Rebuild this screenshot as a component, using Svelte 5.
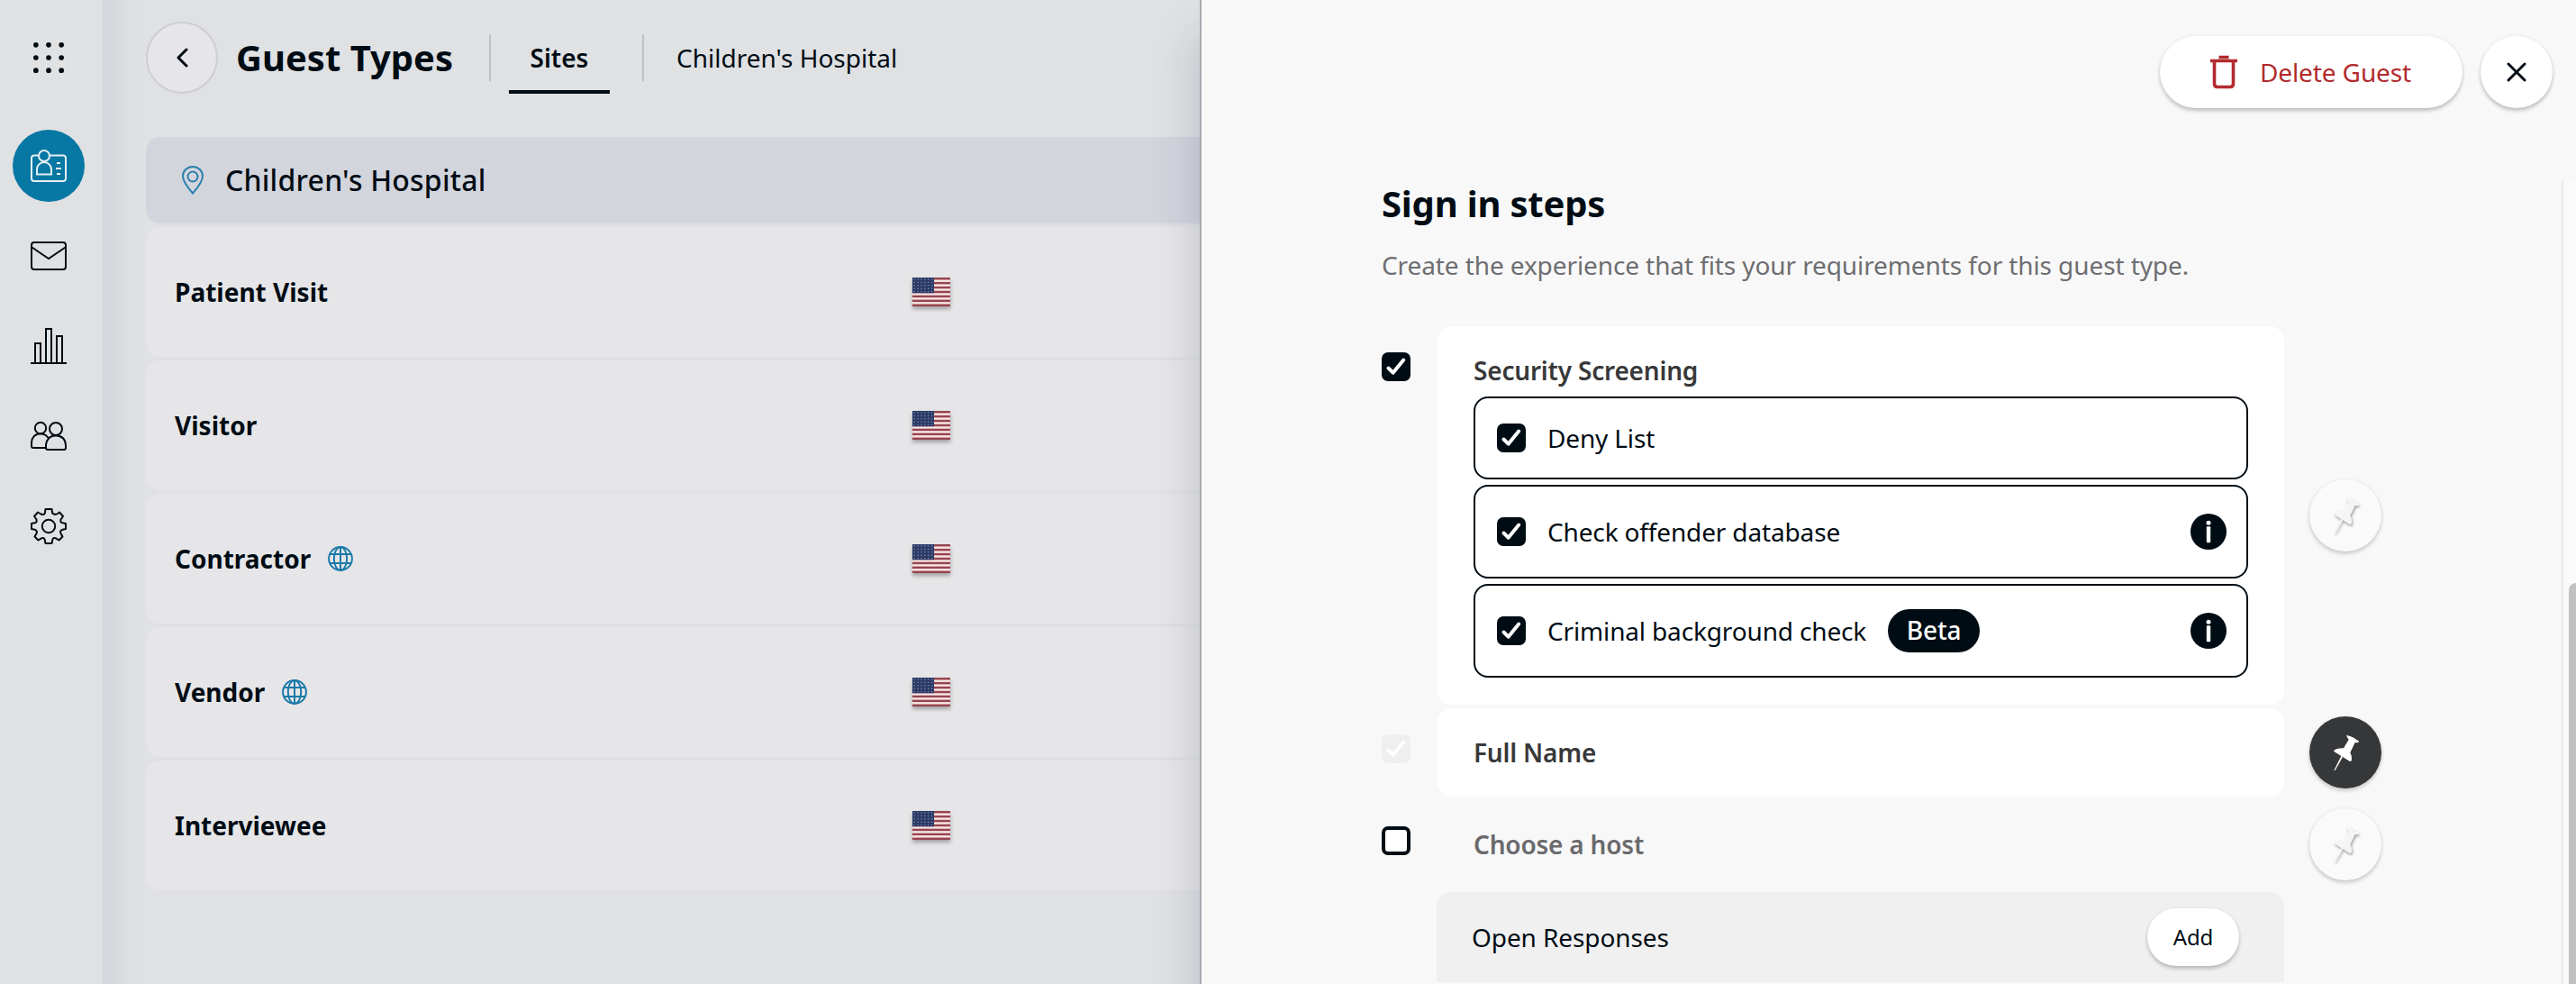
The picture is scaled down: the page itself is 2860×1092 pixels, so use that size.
<script>
  const guestTypes = [
    { name: 'Patient Visit', global: false },
    { name: 'Visitor', global: false },
    { name: 'Contractor', global: true },
    { name: 'Vendor', global: true },
    { name: 'Interviewee', global: false }
  ];
  const screenings = [
    { label: 'Deny List', info: false, beta: false },
    { label: 'Check offender database', info: true, beta: false },
    { label: 'Criminal background check', info: true, beta: true }
  ];
  const dots = [2.8, 16.8, 30.8];
  const stripes = [0, 1, 2, 3, 4, 5, 6];
  const starRows = [0, 1, 2, 3, 4];
  const starCols = [0, 1, 2, 3, 4, 5];
</script>

{#snippet check(state)}
  <span class="check {state}">
    {#if state !== 'off'}
      <svg viewBox="0 0 32 32"><path d="M7.5 17.5 L12.6 22.7 L24.2 8.6" /></svg>
    {/if}
  </span>
{/snippet}

{#snippet pin(active)}
  <button class="pin" class:active aria-label="Pin step">
    <svg viewBox="0 0 240 240">
      <path d="M124 61 Q128 66 136 66 Q152 72 158 79 L165 82 Q164 88 160 88 L152 87 L136 121 Q142 131 141 145 Q139 151 135 150 L82 117 Q79 112 92 108 Q104 105 114 106 L131 77 Q123 68 124 61Z" />
      <path d="M106 132 L111 135 L86 179 L82 180Z" />
    </svg>
  </button>
{/snippet}

<div class="app">
  <nav class="sidebar">
    <svg class="dots" viewBox="0 0 33.6 33.6">
      {#each dots as y}{#each dots as x}<circle cx={x} cy={y} r="2.8" />{/each}{/each}
    </svg>
    <span class="nav-item selected">
      <svg viewBox="0 0 40 40">
        <path d="M9.5 8.5 H4 Q1 8.500 1 11.500 V34 Q1 37 4 37 H36 Q39 37 39 34 V11.500 Q39 8.500 36 8.500 H21" />
        <circle cx="15" cy="9" r="6" />
        <path d="M7 29.500 V24 A8 8 0 0 1 23 24 V29.500Z M29 17 H33 M28 23 H34 M29 29 H33" />
      </svg>
    </span>
    <span class="nav-item">
      <svg viewBox="0 0 40 40"><rect x="1" y="5" width="38" height="30" rx="3" /><path d="M1.500 10.500 L20 23 L38.500 10.500" /></svg>
    </span>
    <span class="nav-item">
      <svg viewBox="0 0 40 40"><path d="M0 39 H40 M5 39 V17 H11 V39 M17 39 V1 H23 V39 M29 39 V9 H35 V39" /></svg>
    </span>
    <span class="nav-item">
      <svg viewBox="0 0 40 40">
        <circle cx="11" cy="11" r="6.200" /><circle cx="28" cy="12" r="7" />
        <path d="M17 33 H3 Q1 33 1 31 V27.500 Q1.500 17.500 11 17.200 Q17 17.500 20 22.500" />
        <path d="M17 29.500 Q18.500 19.500 28 19.200 Q38.500 20 39 30 V33 Q39 35 37 35 H19 Q17 35 17 33Z" />
      </svg>
    </span>
    <span class="nav-item">
      <svg viewBox="0 0 40 40">
        <circle cx="20" cy="20" r="7.200" />
        <path stroke-linejoin="round" d="M16.500 1 H23.500 L24.200 5.500 Q27 8 30 6 L32 4.500 L36 9 L33.500 12.500 Q32.500 15.500 35.500 16.300 L39 17 V23 L35.500 23.700 Q32 25 33.500 28 L35.500 31.500 L31.500 35.500 L28 33.300 Q25 32 24.200 35.500 L23.500 39 H16.500 L15.800 35.500 Q15 32 12 33.300 L8.500 35.500 L4.500 31.500 L6.500 28 Q8 25 4.500 23.700 L1 23 V17 L4.500 16.300 Q7.500 15.500 6.500 12.500 L4 9 L8 4.500 L11.500 6.500 Q15 8 15.800 5.500Z" />
      </svg>
    </span>
  </nav>

  <main class="main">
    <header class="topbar">
      <button class="back" aria-label="Back">
        <svg viewBox="0 0 14 22"><path d="M12 2 L3 11 L12 20" /></svg>
      </button>
      <h1>Guest Types</h1>
      <i class="divider"></i>
      <span class="tab">Sites</span>
      <i class="divider"></i>
      <span class="crumb">Children's Hospital</span>
    </header>

    <section class="list">
      <div class="site">
        <svg viewBox="0 0 24 32"><path d="M12 30.500 Q1 18 1 11.500 A11 10.500 0 0 1 23 11.500 Q23 18 12 30.500Z" /><circle cx="12" cy="12" r="5.500" /></svg>
        <span>Children's Hospital</span>
      </div>
      {#each guestTypes as guest}
        <div class="row">
          <div class="name">
            <span>{guest.name}</span>
            {#if guest.global}
              <svg class="globe" viewBox="0 0 28 28">
                <circle cx="14" cy="14" r="12.900" /><ellipse cx="14" cy="14" rx="7.200" ry="12.900" />
                <path d="M14 1 V27 M2.500 9 H25.500 M2.500 19 H25.500" />
              </svg>
            {/if}
          </div>
          <svg class="flag" viewBox="0 0 42 32">
            <rect width="42" height="32" fill="#f7e6e7" />
            {#each stripes as s}<rect y={s * 4.923} width="42" height="2.462" fill="#98444f" />{/each}
            <rect width="24" height="17.230" fill="#2b3a66" />
            {#each starRows as r}{#each starCols as c}<circle cx={2.2 + c * 3.9} cy={2 + r * 3.4} r="0.700" fill="#8d98b8" />{/each}{/each}
          </svg>
        </div>
      {/each}
    </section>
  </main>

  <aside class="drawer">
    <div class="actions">
      <button class="delete">
        <svg viewBox="0 0 32 38"><path d="M10.500 2.500 H21.500 M1 6.500 H31 M5.500 7 V32 Q5.500 35.500 9 35.500 H23 Q26.500 35.500 26.500 32 V7" /></svg>
        <span>Delete Guest</span>
      </button>
      <button class="close" aria-label="Close">
        <svg viewBox="0 0 22 22"><path d="M2 2 L20 20 M20 2 L2 20" /></svg>
      </button>
    </div>

    <div class="scroller">
      <div class="content">
        <h2>Sign in steps</h2>
        <p>Create the experience that fits your requirements for this guest type.</p>

        <div class="step">
          {@render check('on')}
          <div class="card security">
            <strong>Security Screening</strong>
            {#each screenings as item}
              <div class="option" class:tall={item.info}>
                {@render check('on')}
                <span class="label">{item.label}</span>
                {#if item.beta}<span class="beta">Beta</span>{/if}
                {#if item.info}
                  <svg class="info" viewBox="0 0 40 40"><circle cx="20" cy="20" r="20" fill="#000c14" /><circle cx="20" cy="10.300" r="2.500" fill="#fff" /><rect x="17.800" y="14.300" width="4.400" height="18" rx="1" fill="#fff" /></svg>
                {/if}
              </div>
            {/each}
          </div>
          {@render pin(false)}
        </div>

        <div class="step">
          {@render check('disabled')}
          <div class="card single"><strong>Full Name</strong></div>
          {@render pin(true)}
        </div>

        <div class="step">
          {@render check('off')}
          <div class="card single inactive"><strong>Choose a host</strong></div>
          {@render pin(false)}
        </div>

        <div class="responses">
          <span>Open Responses</span>
          <button class="add">Add</button>
        </div>
      </div>
      <div class="track"><div class="thumb"></div></div>
    </div>
  </aside>
</div>

<style>
  :global(body) { overflow: hidden; }
  .app {
    display: flex;
    width: 2860px;
    height: 1092px;
    overflow: hidden;
    background: #dfe1e3;
    color: #000c14;
    font-family: 'Noto Sans', 'Open Sans', sans-serif;
    font-size: 28px;
    line-height: 38px;
  }
  .app, .app * { box-sizing: border-box; }
  svg { display: block; flex: none; fill: none; }
  button { font: inherit; letter-spacing: inherit; color: inherit; border: 0; padding: 0; margin: 0; flex: none; display: flex; align-items: center; justify-content: center; }
  h1, h2, p { margin: 0; white-space: nowrap; }
  span { white-space: nowrap; }

  .sidebar {
    flex: none;
    width: 114px;
    padding: 47px 0 0 14px;
    display: flex;
    flex-direction: column;
    gap: 20px;
  }
  .dots { width: 34px; height: 34px; margin: 0 0 43px 23px; fill: #000c14; }
  .nav-item { width: 80px; height: 80px; border-radius: 50%; display: flex; align-items: center; justify-content: center; }
  .nav-item svg { width: 40px; height: 40px; stroke: #000c14; stroke-width: 2; }
  .nav-item.selected { background: #0777a3; }
  .nav-item.selected svg { stroke: #e4f0f5; }

  .main {
    flex: none;
    width: 1218px;
    padding: 24px 0 0 48px;
    background: linear-gradient(90deg, #d5d6dc 0, #d8dade 16px, #dddfe2 30px, #dfe1e3 42px);
  }
  .topbar { display: flex; align-items: center; height: 80px; }
  .back { width: 80px; height: 80px; border-radius: 50%; background: #e6e6e8; border: 2px solid #ccced0; }
  .back svg { width: 14px; height: 22px; stroke: #000c14; stroke-width: 3; stroke-linecap: round; stroke-linejoin: round; }
  h1 { flex: none; width: 301px; padding-left: 20px; font-size: 40px; line-height: 54px; font-weight: 700; }
  .divider { flex: none; width: 2px; height: 52px; background: #bfc1c3; }
  .tab { flex: none; height: 80px; line-height: 80px; width: 112px; margin: 0 36px 0 20px; text-align: center; font-weight: 600; border-bottom: 4px solid #000c14; }
  .crumb { margin-left: 36px; }

  .list { margin-top: 48px; display: flex; flex-direction: column; gap: 4px; }
  .site {
    height: 96px;
    display: flex;
    align-items: center;
    gap: 24px;
    padding-left: 40px;
    border-radius: 16px 0 0 16px;
    background: #d3d5dd;
    font-size: 32px;
    font-weight: 500;
    letter-spacing: 0.2px;
  }
  .site svg { width: 24px; height: 32px; stroke: #2a7fab; stroke-width: 2; }
  .row { height: 144px; display: flex; align-items: center; padding-left: 32px; border-radius: 16px 0 0 16px; background: #e6e6e8; }
  .name { width: 819px; display: flex; align-items: center; gap: 19px; font-weight: 700; }
  .globe { width: 28px; height: 28px; stroke: #1b7aa8; stroke-width: 2; }
  .flag { width: 42px; height: 32px; filter: drop-shadow(0 3px 2px rgba(0, 0, 0, 0.3)); }

  .drawer {
    position: relative;
    flex: none;
    width: 1528px;
    border-left: 2px solid #a9aab0;
    background: #f8f8f8;
    box-shadow: 0 40px 48px rgba(30, 35, 70, 0.2);
    letter-spacing: -0.1px;
    display: flex;
    flex-direction: column;
  }
  .actions { flex: none; height: 200px; padding: 40px 26px 0 0; display: flex; justify-content: flex-end; gap: 20px; }
  .delete, .close, .add { background: #fff; box-shadow: 0 3px 4px rgba(0, 0, 0, 0.22), 0 0 4px rgba(0, 0, 0, 0.05); }
  .delete { width: 336px; height: 80px; border-radius: 40px; gap: 24px; padding-right: 2px; color: #b22b2e; }
  .delete svg { width: 32px; height: 38px; stroke: #b22b2e; stroke-width: 3.6; stroke-linecap: butt; }
  .close { width: 80px; height: 80px; border-radius: 50%; }
  .close svg { width: 22px; height: 22px; stroke: #000c14; stroke-width: 3; stroke-linecap: round; }

  .scroller { flex: 1; min-height: 0; display: flex; justify-content: space-between; }
  .content { width: 1120px; margin-left: 200px; }
  h2 { margin-top: -1px; font-size: 40px; line-height: 54px; font-weight: 700; letter-spacing: -0.2px; }
  p { margin-top: 22px; height: 87px; color: #6e6e70; }
  .step { display: flex; align-items: center; margin-bottom: 4px; }
  .check { flex: none; width: 32px; height: 32px; border-radius: 7px; background: #000c14; }
  .check svg { width: 32px; height: 32px; stroke: #fff; stroke-width: 4; stroke-linecap: round; stroke-linejoin: round; }
  .check.off { background: #fff; border: 4px solid #000c14; }
  .check.disabled { background: #efefef; }
  .step > .check { align-self: flex-start; margin: 29px 30px 0 0; }
  .card { width: 940px; border-radius: 16px; background: #fff; }
  .card strong { display: block; font-weight: 600; color: #38383a; letter-spacing: -0.2px; }
  .security { height: 420px; padding: 30px 40px 0; }
  .security strong { height: 48px; }
  .single { height: 98px; padding: 30px 40px; }
  .inactive { background: transparent; }
  .inactive strong { color: #6a6a6c; }
  .option { height: 92px; display: flex; align-items: center; padding: 0 22px 0 24px; margin-bottom: 6px; border: 2px solid #000c14; border-radius: 16px; }
  .option.tall { height: 104px; }
  .label { margin-left: 24px; letter-spacing: -0.15px; }
  .beta { width: 102px; height: 48px; margin-left: 24px; line-height: 47px; border-radius: 24px; background: #000c14; color: #fff; text-align: center; font-weight: 500; }
  .info { width: 40px; height: 40px; margin-left: auto; }
  .pin { width: 80px; height: 80px; margin-left: 28px; border-radius: 50%; background: #fafafa; box-shadow: 0 3px 4px rgba(0, 0, 0, 0.16), 0 0 4px rgba(0, 0, 0, 0.07); }
  .pin svg { width: 80px; height: 80px; fill: #f5f5f5; filter: drop-shadow(1px 2px 1.5px rgba(0, 0, 0, 0.36)); }
  .pin.active { background: #363739; }
  .pin.active svg { fill: #fff; filter: none; }
  .responses { width: 941px; height: 100px; margin-left: 61px; padding: 0 50px 0 39px; display: flex; align-items: center; justify-content: space-between; border-radius: 16px 16px 0 0; background: #f0f0f0; }
  .add { width: 102px; height: 64px; border-radius: 32px; font-size: 24px; }

  .track { flex: none; width: 16px; border-left: 2px solid #e8e8e8; background: #fafafa; padding: 447px 0 0 6px; }
  .thumb { height: 445px; background: #c1c1c1; border-radius: 8px 0 0 0; }
</style>
